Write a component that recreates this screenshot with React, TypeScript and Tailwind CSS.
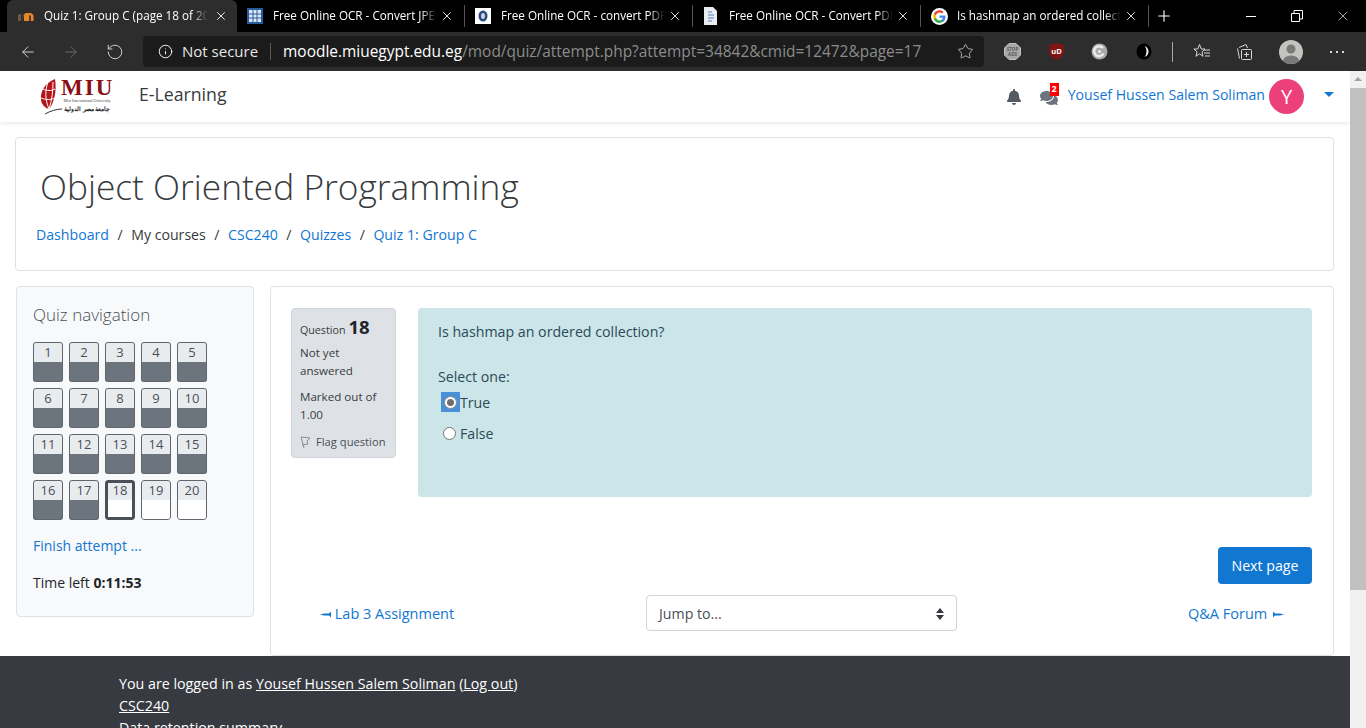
import { ArrowLeft, ArrowRight, RotateCw, Info, Star, X, Plus } from "lucide-react";
import { FaBell, FaComments } from "react-icons/fa";

const sans = "font-['Open_Sans','Noto_Sans',sans-serif]";

const tabs = [
  { title: "Free Online OCR - Convert JPEG", icon: "grid" },
  { title: "Free Online OCR - convert PDF", icon: "seal" },
  { title: "Free Online OCR - Convert PDF", icon: "doc" },
  { title: "Is hashmap an ordered collection", icon: "google" },
];

function Favicon({ kind }: { kind: string }) {
  if (kind === "moodle") {
    return (
      <svg width="16" height="12" viewBox="0 0 16 12">
        <path d="M0 11V6c0-1 1-2 2-2h1v7zM4.500 11V6c0-1 .6-2 1.500-2" fill="#6b5a4a" />
        <path d="M6 11V5.500C6 4 7 3 8.500 3h3C14 3 15.500 4.500 15.500 6.500V11h-2.700V6.500c0-.8-.5-1.200-1.200-1.200h-.4V11H8.600V5.300C8 5.500 8.700 6 8.700 7v4z" fill="#e8872c" />
      </svg>
    );
  }
  if (kind === "grid") {
    return (
      <svg width="16" height="16" viewBox="0 0 16 16">
        <rect width="16" height="16" fill="#2a5a9e" />
        <path d="M2 2h12v12H2z" fill="#dbe9f6" />
        <path d="M6 2v12M10 2v12M2 6h12M2 10h12" stroke="#2a5a9e" strokeWidth="1" />
      </svg>
    );
  }
  if (kind === "seal") {
    return (
      <svg width="16" height="16" viewBox="0 0 16 16">
        <rect width="16" height="16" fill="#fff" />
        <ellipse cx="8" cy="8" rx="4.500" ry="5.500" fill="#2a4a7c" />
        <ellipse cx="8" cy="8" rx="2" ry="3" fill="#c8d4e4" />
      </svg>
    );
  }
  if (kind === "doc") {
    return (
      <svg width="15" height="18" viewBox="0 0 15 18">
        <path d="M1 0h9l4 4v14H1z" fill="#e9edf2" />
        <path d="M5 5h4M5 8h6M5 11h6M5 14h4" stroke="#4a7fc1" strokeWidth="1" />
      </svg>
    );
  }
  return (
    <svg width="17" height="17" viewBox="0 0 48 48">
      <circle cx="24" cy="24" r="24" fill="#fff" />
      <path d="M41 24.500c0-1.300-.1-2.500-.3-3.500H24v6.800h9.600c-.4 2.200-1.700 4-3.500 5.300v4.400h5.700c3.300-3.100 5.200-7.600 5.200-13z" fill="#4285f4" />
      <path d="M24 42c4.700 0 8.700-1.600 11.800-4.300l-5.700-4.400c-1.600 1.100-3.600 1.700-6.100 1.700-4.600 0-8.500-3.100-9.900-7.300H8.200v4.600C11.200 37.900 17.100 42 24 42z" fill="#34a853" />
      <path d="M14.100 27.700c-.4-1.100-.6-2.300-.6-3.700s.2-2.500.6-3.700v-4.600H8.200C7 18 6.300 20.900 6.300 24s.7 6 1.900 8.300z" fill="#fbbc05" />
      <path d="M24 13c2.600 0 5 .9 6.800 2.700l5.100-5.100C32.700 7.700 28.700 6 24 6 17.100 6 11.200 10.100 8.200 15.700l5.900 4.600C15.500 16.100 19.400 13 24 13z" fill="#ea4335" />
    </svg>
  );
}

function TabTitle({ children }: { children: string }) {
  return (
    <span className="mb-[2px] ml-[6px] h-4 w-[164px] overflow-hidden whitespace-nowrap text-[11.700px] leading-4 [mask-image:linear-gradient(90deg,#000_90%,transparent)]">
      {children}
    </span>
  );
}

function ChromeTab({ title, icon }: { title: string; icon: string }) {
  return (
    <div className="flex h-8 w-[228px] items-center pl-[10px] pr-[10px] text-white">
      <span className="flex w-[20px] shrink-0 items-center"><Favicon kind={icon} /></span>
      <TabTitle>{title}</TabTitle>
      <X className="ml-auto h-3.5 w-3.5" strokeWidth={1.5} />
      <span className="-mr-[10px] ml-[10px] h-[22px] w-px shrink-0 bg-[#555]" />
    </div>
  );
}

function ExtensionIcons() {
  return (
    <>
      <svg className="ml-[20px]" width="17" height="17" viewBox="0 0 17 17">
        <path d="M5 .5h7L16.500 5v7L12 16.500H5L.5 12V5z" fill="#a8a8a8" stroke="#c4c4c4" />
        <text x="8.500" y="8" fontSize="4.500" fontWeight="700" fill="#5a5a5a" textAnchor="middle">STOP</text>
        <text x="8.500" y="12.500" fontSize="4.500" fontWeight="700" fill="#5a5a5a" textAnchor="middle">ADS</text>
      </svg>
      <svg className="ml-[28px]" width="15" height="17" viewBox="0 0 15 17">
        <path d="M7.500 0 15 2v7c0 3.500-3.500 6.500-7.500 8C3.500 15.500 0 12.500 0 9V2z" fill="#7e1414" />
        <text x="7.500" y="10.500" fontSize="7.500" fontWeight="700" fill="#fff" textAnchor="middle">uD</text>
      </svg>
      <svg className="ml-[27px]" width="17" height="17" viewBox="0 0 17 17" fill="none">
        <circle cx="8.500" cy="8.500" r="8" fill="#a9a9a9" />
        <path d="M12 5a5 5 0 1 0 .5 5.500" stroke="#ececec" strokeWidth="2.500" />
        <circle cx="8.500" cy="8.500" r="1.500" fill="#ececec" />
      </svg>
      <svg className="ml-[28px]" width="16" height="17" viewBox="0 0 16 17">
        <ellipse cx="8" cy="8.500" rx="7.500" ry="8" fill="#000" />
        <path d="M8.500 3c3 1 4 3.500 4 5.500s-1 4.500-4 5.500c1.500-1.500 2-3.500 2-5.500S10 4.500 8.500 3z" fill="#fff" />
      </svg>
      <span className="ml-[20px] h-5 w-px bg-[#a5a5a5]" />
      <svg className="ml-[20px]" width="18" height="17" viewBox="0 0 18 17" fill="none" stroke="#d8d8d8">
        <path d="M6.500 1.500 8.300 6H12L9 8.800l1 4.500-3.500-2.500-3.500 2.500 1-4.500L.8 6h3.900z" />
        <path d="M11 7h6M11 10h6M12 13h5" />
      </svg>
      <svg className="ml-[25px]" width="17" height="18" viewBox="0 0 17 18" fill="none" stroke="#d8d8d8">
        <path d="M3 4.500 10 1.500l1.500 3.500M1.500 5.500l2 10" />
        <rect x="5.500" y="6.500" width="10" height="10" rx="1" />
        <path d="M10.500 9v5M8 11.500h5" />
      </svg>
      <svg className="ml-[26px]" width="24" height="24" viewBox="0 0 24 24">
        <defs>
          <clipPath id="avatar-clip"><circle cx="12" cy="12" r="12" /></clipPath>
        </defs>
        <circle cx="12" cy="12" r="12" fill="#c5c3c0" />
        <g clipPath="url(#avatar-clip)" fill="#797979">
          <circle cx="12" cy="9" r="4.500" />
          <ellipse cx="12" cy="21" rx="8" ry="5.500" />
        </g>
      </svg>
      <span className="ml-[27px] flex gap-1">
        <span className="h-[2px] w-[2px] bg-[#d8d8d8]" />
        <span className="h-[2px] w-[2px] bg-[#d8d8d8]" />
        <span className="h-[2px] w-[2px] bg-[#d8d8d8]" />
      </span>
    </>
  );
}

function BrowserChrome() {
  return (
    <div className="h-[71px] shrink-0 bg-[#2d2d2d] text-white">
      <div className="flex h-8 bg-black">
        <div className="ml-[7px] flex h-8 w-[230px] items-center rounded-t-md bg-[#2d2d2d] pl-[11px] pr-[9px]">
          <span className="flex w-[20px] shrink-0 items-center"><Favicon kind="moodle" /></span>
          <TabTitle>Quiz 1: Group C (page 18 of 20)</TabTitle>
          <X className="ml-auto h-3.5 w-3.5" strokeWidth={1.5} />
        </div>
        {tabs.map((t) => (
          <ChromeTab key={t.icon} title={t.title} icon={t.icon} />
        ))}
        <Plus className="ml-[6px] mt-[7px] h-[18px] w-[18px]" strokeWidth={1.5} />
        <div className="ml-auto flex">
          <div className="flex h-8 w-[46px] items-center justify-center"><span className="h-px w-[10px] bg-white" /></div>
          <div className="flex h-8 w-[46px] items-center justify-center">
            <svg width="12" height="12" viewBox="0 0 12 12" fill="none" stroke="#fff"><path d="M.5 3.500h8v8h-8zM3 3.500V.5h8.500V9H8.500" /></svg>
          </div>
          <div className="flex h-8 w-[46px] items-center justify-center"><X className="h-4 w-4" strokeWidth={1} /></div>
        </div>
      </div>
      <div className="flex h-[39px] items-center">
        <ArrowLeft className="ml-[19px] h-[18px] w-[18px] text-[#d8d8d8]" strokeWidth={1.25} />
        <ArrowRight className="ml-[25px] h-[18px] w-[18px] text-[#6e6e6e]" strokeWidth={1.25} />
        <RotateCw className="ml-[26px] h-[18px] w-[18px] -scale-x-100 text-[#d8d8d8]" strokeWidth={1.25} />
        <div className="ml-[19px] flex h-[31px] w-[841px] items-center rounded bg-[#1b1b1b] pl-[15px] pr-[10px] text-[15px]">
          <Info className="h-[15px] w-[15px]" strokeWidth={1.5} />
          <span className="ml-[9px] text-[#e6e6e6]">Not secure</span>
          <span className="mx-[12px] h-[17px] w-px bg-[#5a5a5a]" />
          <span className="text-[15.450px] text-white">moodle.miuegypt.edu.eg</span>
          <span className="text-[15.450px] text-[#8c8c8c]">/mod/quiz/attempt.php?attempt=34842&amp;cmid=12472&amp;page=17</span>
          <Star className="ml-auto h-[17px] w-[17px] text-[#bdbdbd]" strokeWidth={1.25} />
        </div>
        <ExtensionIcons />
      </div>
    </div>
  );
}

function MiuLogo() {
  return (
    <div className="relative flex items-start">
      <svg width="22" height="36" viewBox="0 0 22 36" className="mt-px">
        <path d="M15 0C5 4 0 12 1 21c1 5 4 8 8 9 5-6 8-18 6-30z" fill="#b3151b" />
        <path d="M3 10c4 2 8 2 12 0M1 19c5 2 10 2 14 0M8 3c-3 8-3 18 1 27M13 3c0 9-1 18-4 27" fill="none" stroke="#fff" strokeWidth="1" />
        <path d="M5 35c5-3 12-5 17-5" fill="none" stroke="#333" strokeWidth="1" />
      </svg>
      <div className="ml-[-1px] w-[52px] text-center font-['Liberation_Serif',serif] leading-none">
        <div className="text-[23px] font-bold leading-[20px] tracking-[2px] text-[#8a1016]">MIU</div>
        <div className="whitespace-nowrap text-[4px] leading-[5px] text-[#444]">Misr International University</div>
        <div className="mt-[3px] text-[6px] font-bold leading-[7px] text-[#222]">جامعة مصر الدولية</div>
      </div>
    </div>
  );
}

function MoodleNav() {
  return (
    <div className="flex h-[51px] shrink-0 items-center bg-white pl-10 shadow-[0_2px_4px_rgba(0,0,0,0.08)]">
      <MiuLogo />
      <span className="mb-[4px] ml-[26px] text-[17.700px] text-[#373a3c]">E-Learning</span>
      <FaBell className="ml-auto h-4 w-4 text-[#545b62]" />
      <div className="relative ml-[18px] h-4 w-[18px]">
        <FaComments className="mt-px h-4 w-[18px] text-[#6c757d]" />
        <span className="absolute -right-[1px] -top-[6px] flex h-[13px] w-[9px] items-center justify-center bg-[#ff0000] text-[9px] font-bold text-white">2</span>
      </div>
      <span className="mb-[3px] ml-[10px] whitespace-nowrap text-[14.100px] text-[#1177d1]">Yousef Hussen Salem Soliman</span>
      <span className="ml-[4px] flex h-[35px] w-[35px] items-center justify-center rounded-full bg-[#ec407a] text-[20px] text-white">Y</span>
      <span className="mb-[5px] ml-[20px] mr-[16px] h-0 w-0 border-x-[5px] border-t-[5px] border-x-transparent border-t-[#1177d1]" />
    </div>
  );
}

function QuizNav() {
  const nums = Array.from({ length: 20 }, (_, i) => i + 1);
  return (
    <aside className="h-[331px] w-[238px] shrink-0 rounded border border-[#dee2e6] bg-[#f8f9fa] px-4 pt-4">
      <h2 className="text-[17px] font-light leading-6 text-[#495057]">Quiz navigation</h2>
      <div className="mt-[15px] grid w-[174px] grid-cols-5 gap-[6px]">
        {nums.map((n) => {
          const answered = n < 18;
          const current = n === 18;
          return (
            <div key={n} className={`relative flex h-10 w-[30px] flex-col overflow-hidden rounded-[3px] ${answered ? "bg-[#6c757d]" : "bg-white"}`}>
              <div className="h-[20px] shrink-0 bg-[#e9ecef] pt-px text-center text-[13px] leading-[18px] text-[#495057]">{n}</div>
              <span className={`absolute inset-0 rounded-[3px] ${current ? "border-[3px] border-[#495057]" : "border border-[#5f666d]"}`} />
            </div>
          );
        })}
      </div>
      <a className="mt-[16px] block text-[14px] leading-5 text-[#1177d1]">Finish attempt ...</a>
      <p className="mt-[17px] text-[14px] leading-5 text-[#212529]">Time left <b>0:11:53</b></p>
    </aside>
  );
}

function QuestionInfo() {
  return (
    <div className="h-[150px] w-[105px] shrink-0 rounded-sm border border-[#ced4da] bg-[#dee2e6] pl-2 pt-[6px] text-[11.600px] leading-[18px] text-[#373a3c]">
      <div className="flex h-6 items-baseline text-[10.700px]">Question <b className="ml-[3px] text-[18.500px] leading-6 text-[#212529]">18</b></div>
      <div className="mt-[5px] w-[70px]">Not yet answered</div>
      <div className="mt-2">Marked out of 1.00</div>
      <div className="mt-[9px] flex items-center whitespace-nowrap text-[11.200px] text-[#495057]">
        <svg width="11" height="13" viewBox="0 0 11 13" fill="none" stroke="#8a8f94" className="mr-[5px] shrink-0"><path d="M1 1l3 11M1 1l9 1-3 3 1 3-6 1" /></svg>
        Flag question
      </div>
    </div>
  );
}

function QuestionBody() {
  return (
    <div className="ml-[22px] h-[189px] flex-1 rounded bg-[#cce5e9] pl-5 pt-[13px] text-[14.200px] leading-[21px] text-[#2b4a56]">
      <p>Is hashmap an ordered collection?</p>
      <p className="mt-6">Select one:</p>
      <label className="mt-[5px] flex h-5 items-center">
        <span className="ml-[3px] flex h-5 w-[19px] items-center justify-center bg-[#4a90d9]">
          <span className="flex h-[13px] w-[13px] items-center justify-center rounded-full border border-[#8a8a8a] bg-white">
            <span className="h-[7px] w-[7px] rounded-full bg-[#6f6f6f]" />
          </span>
        </span>
        True
      </label>
      <label className="mt-[11px] flex h-5 items-center">
        <span className="ml-[5px] mr-[4px] h-[13px] w-[13px] rounded-full border border-[#767676] bg-white" />
        False
      </label>
    </div>
  );
}

function PinArrow({ flip }: { flip?: boolean }) {
  return (
    <svg width="11" height="7" viewBox="0 0 11 7" fill="#1177d1" className={`inline-block align-[1px] ${flip ? "ml-[2px] -scale-x-100" : ""}`}>
      <path d="M0 3.500 4 2.500h5L11 .5v6L9 4.500H4z" />
    </svg>
  );
}

export default function App() {
  return (
    <div className={`flex h-[728px] w-[1366px] flex-col overflow-hidden bg-white ${sans}`}>
      <BrowserChrome />
      <div className="flex min-h-0 flex-1">
        <div className="w-[1350px] shrink-0 overflow-hidden">
          <MoodleNav />
          <div className="px-4 pt-[15px]">
            <header className="-ml-px h-[134px] w-[1319px] rounded border border-[#dee2e6] pl-6 pt-[23px]">
              <h1 className="text-[35.300px] font-light leading-[50px] text-[#373a3c]">Object Oriented Programming</h1>
              <nav className="-ml-1 mt-[13px] flex gap-[8.500px] text-[14.150px] leading-[22px] text-[#373a3c]">
                <a className="text-[#1177d1]">Dashboard</a><span>/</span>
                <span>My courses</span><span>/</span>
                <a className="text-[#1177d1]">CSC240</a><span>/</span>
                <a className="text-[#1177d1]">Quizzes</a><span>/</span>
                <a className="text-[#1177d1]">Quiz 1: Group C</a>
              </nav>
            </header>
            <div className="mt-[15px] flex gap-4">
              <QuizNav />
              <main className="h-[370px] w-[1064px] shrink-0 rounded border border-[#dee2e6] pl-5 pr-[21px] pt-[21px]">
                <div className="flex">
                  <QuestionInfo />
                  <QuestionBody />
                </div>
                <div className="mt-[50px] flex justify-end">
                  <button className="h-[37px] w-[94px] rounded bg-[#1177d1] text-[14.200px] text-white">Next page</button>
                </div>
                <div className="mt-[11px] flex h-9 items-center text-[14.500px] text-[#1177d1]">
                  <a className="ml-[29px] w-[326px] pt-px"><PinArrow /> Lab 3 Assignment</a>
                  <div className="flex h-9 w-[311px] items-center justify-between rounded border border-[#ced4da] px-3 pt-px text-[14.200px] text-[#495057]">
                    Jump to...
                    <svg width="8" height="12" viewBox="0 0 8 12" fill="#343a40"><path d="M4 0l4 5H0zM4 12 0 7h8z" /></svg>
                  </div>
                  <a className="ml-auto mr-[28px] pt-px">Q&amp;A Forum <PinArrow flip /></a>
                </div>
              </main>
            </div>
          </div>
          <footer className="h-[200px] bg-[#373a40] pl-[119px] pt-[17px] text-[14.250px] leading-[22px] text-white">
            <p>You are logged in as <u>Yousef Hussen Salem Soliman</u> (<u>Log out</u>)</p>
            <p><u>CSC240</u></p>
            <p><u>Data retention summary</u></p>
          </footer>
        </div>
        <div className="flex w-4 flex-col items-center bg-[#f1f1f1] pt-[6px]">
          <span className="h-0 w-0 border-x-[4px] border-b-[4px] border-x-transparent border-b-[#a3a3a3]" />
          <span className="mt-[7px] h-[502px] w-full bg-[#c1c1c1]" />
        </div>
      </div>
    </div>
  );
}
